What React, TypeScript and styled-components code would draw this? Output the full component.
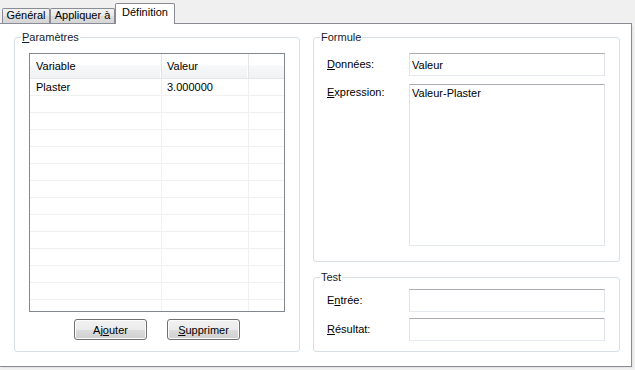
import React from "react";
import styled, { createGlobalStyle } from "styled-components";

const GlobalStyle = createGlobalStyle`
  html, body {
    margin: 0;
    padding: 0;
    background: #f0f0f0;
  }
  body {
    font-family: "Liberation Sans", Arial, sans-serif;
    font-size: 11px;
    color: #000;
  }
`;

const Window = styled.div`
  box-sizing: border-box;
  width: 635px;
  height: 370px;
  padding-top: 3px;
  overflow: hidden;
`;

const TabStrip = styled.div`
  display: flex;
  align-items: flex-end;
  height: 20px;
  padding-left: 2px;
`;

const Tab = styled.div<{ $active?: boolean; $w: number }>`
  box-sizing: border-box;
  width: ${(p) => p.$w}px;
  height: ${(p) => (p.$active ? 21 : 15)}px;
  margin-bottom: ${(p) => (p.$active ? -1 : 0)}px;
  position: relative;
  z-index: ${(p) => (p.$active ? 1 : 0)};
  border: 1px solid #898c95;
  border-bottom: none;
  border-radius: 2px 2px 0 0;
  background: ${(p) =>
    p.$active
      ? "#fff"
      : "linear-gradient(#f2f2f2, #e8e8e8 50%, #dddddd 51%, #d6d6d6)"};
  display: flex;
  justify-content: center;
  padding-top: ${(p) => (p.$active ? 2 : 0)}px;
  line-height: 13px;
  white-space: nowrap;
`;

const Panel = styled.div`
  box-sizing: border-box;
  width: 633px;
  height: 344px;
  margin-left: -1px;
  border: 1px solid #898c95;
  background: #fff;
  box-shadow: 2px 2px 0 -1px #e4e4e4;
  padding: 7px 11px 0 14px;
  display: grid;
  grid-template-columns: 286px 307px;
  column-gap: 13px;
  align-items: start;
`;

const Column = styled.div`
  display: flex;
  flex-direction: column;
  gap: 9px;
`;

const GroupBox = styled.fieldset<{ $h: number }>`
  box-sizing: border-box;
  height: ${(p) => p.$h}px;
  margin: 0;
  padding: 0;
  min-width: 0;
  border: 1px solid #d5dfe5;
  border-radius: 3px;
`;

const Legend = styled.legend`
  margin-left: 6px;
  padding: 0 1px;
  line-height: 13px;
  color: #151c2e;
`;

const Key = styled.span`
  text-decoration: underline;
`;

/* ---- Paramètres ---- */

const ParamsBody = styled.div`
  padding: 9px 14px 0;
`;

const Table = styled.div`
  box-sizing: border-box;
  height: 259px;
  border: 1px solid #828790;
  background: #fff;
  overflow: hidden;
`;

const HeaderRow = styled.div`
  display: grid;
  grid-template-columns: 132px 87px 1fr;
  box-sizing: border-box;
  height: 25px;
  border-bottom: 1px solid #e5e5e5;
  background: linear-gradient(#ffffff, #ffffff 45%, #f7f8f9 50%, #f1f2f4);
`;

const HeaderCell = styled.div`
  display: flex;
  align-items: center;
  padding-left: 6px;
  border-right: 1px solid #e3e4e6;
  box-shadow: inset -1px 0 0 #fff;
  &:nth-child(2) {
    padding-left: 5px;
  }
  &:last-child {
    border-right: none;
    box-shadow: none;
  }
`;

const Row = styled.div`
  display: grid;
  grid-template-columns: 132px 87px 1fr;
  box-sizing: border-box;
  height: 17px;
  border-bottom: 1px solid #f0f0f0;
`;

const Cell = styled.div`
  padding-left: 6px;
  line-height: 16px;
  border-right: 1px solid #f0f0f0;
  white-space: nowrap;
  &:nth-child(2) {
    padding-left: 5px;
  }
  &:last-child {
    border-right: none;
  }
`;

const ButtonRow = styled.div`
  display: flex;
  justify-content: center;
  gap: 20px;
  margin-top: 7px;
`;

const Button = styled.button`
  box-sizing: border-box;
  width: 73px;
  height: 21px;
  padding: 0;
  border: 1px solid #707070;
  border-radius: 3px;
  background: linear-gradient(#f2f2f2, #ebebeb 50%, #dddddd 51%, #cfcfcf);
  box-shadow: inset 0 0 0 1px #fcfcfc;
  font-family: inherit;
  font-size: 11px;
  color: #000;
`;

/* ---- Formule / Test ---- */

const FormGrid = styled.div<{ $top: number; $gap: number }>`
  display: grid;
  grid-template-columns: 82px 196px;
  row-gap: ${(p) => p.$gap}px;
  padding: ${(p) => p.$top}px 14px 0 13px;
`;

const Label = styled.label<{ $top?: boolean }>`
  display: flex;
  align-items: ${(p) => (p.$top ? "flex-start" : "center")};
  padding-top: ${(p) => (p.$top ? 2 : 0)}px;
  line-height: 13px;
`;

const fieldBorder = `
  border: 1px solid #e2e3ea;
  border-top-color: #abadb3;
  border-bottom-color: #e3e9ef;
`;

const TextBox = styled.input`
  box-sizing: border-box;
  width: 196px;
  height: 23px;
  margin: 0;
  padding: 0 2px;
  ${fieldBorder}
  background: #fff;
  font-family: inherit;
  font-size: 11px;
  color: #000;
  outline: none;
`;

const TextArea = styled.textarea`
  box-sizing: border-box;
  width: 196px;
  height: 162px;
  margin: 0;
  padding: 2px 2px;
  ${fieldBorder}
  background: #fff;
  font-family: inherit;
  font-size: 11px;
  line-height: 13px;
  color: #000;
  resize: none;
  overflow: hidden;
  outline: none;
`;

const rows = [
  { name: "Plaster", value: "3.000000" },
  ...Array.from({ length: 14 }, () => ({ name: "", value: "" })),
];

export default function App() {
  return (
    <Window>
      <GlobalStyle />
      <TabStrip>
        <Tab $w={48}>Général</Tab>
        <Tab $w={65}>Appliquer à</Tab>
        <Tab $w={60} $active>
          Définition
        </Tab>
      </TabStrip>
      <Panel>
        <GroupBox $h={321}>
          <Legend>
            <Key>P</Key>aramètres
          </Legend>
          <ParamsBody>
            <Table>
              <HeaderRow>
                <HeaderCell>Variable</HeaderCell>
                <HeaderCell>Valeur</HeaderCell>
                <HeaderCell />
              </HeaderRow>
              {rows.map((r, i) => (
                <Row key={i}>
                  <Cell>{r.name}</Cell>
                  <Cell>{r.value}</Cell>
                  <Cell />
                </Row>
              ))}
            </Table>
            <ButtonRow>
              <Button>
                Aj<Key>o</Key>uter
              </Button>
              <Button>
                <Key>S</Key>upprimer
              </Button>
            </ButtonRow>
          </ParamsBody>
        </GroupBox>

        <Column>
          <GroupBox $h={231}>
            <Legend>Formule</Legend>
            <FormGrid $top={9} $gap={8}>
              <Label>
                <Key>D</Key>onnées:
              </Label>
              <TextBox readOnly value="Valeur" />
              <Label $top>
                <Key>E</Key>xpression:
              </Label>
              <TextArea readOnly value="Valeur-Plaster" />
            </FormGrid>
          </GroupBox>
          <GroupBox $h={81}>
            <Legend>Test</Legend>
            <FormGrid $top={5} $gap={6}>
              <Label>
                E<Key>n</Key>trée:
              </Label>
              <TextBox readOnly value="" />
              <Label>
                <Key>R</Key>ésultat:
              </Label>
              <TextBox readOnly value="" />
            </FormGrid>
          </GroupBox>
        </Column>
      </Panel>
    </Window>
  );
}
